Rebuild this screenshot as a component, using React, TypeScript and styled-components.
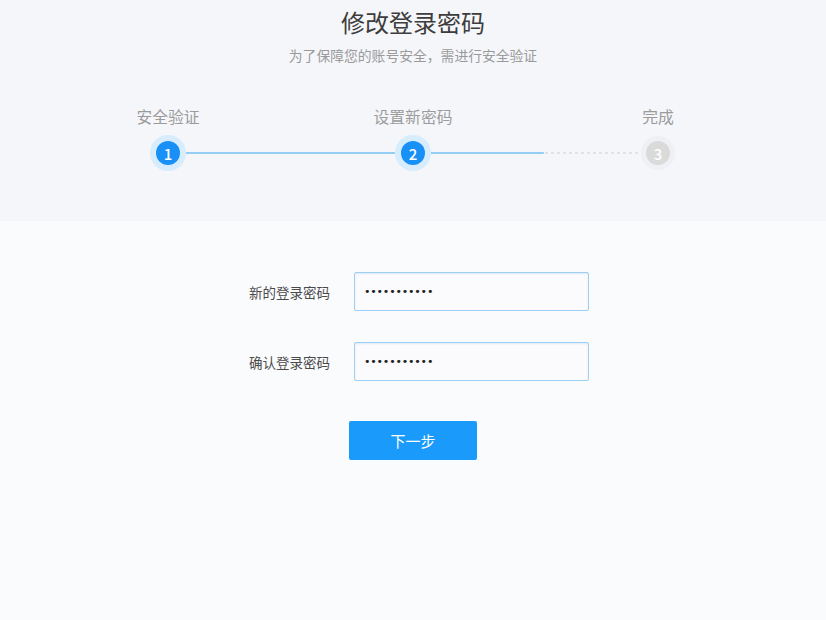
import React from "react";
import styled, { createGlobalStyle, css } from "styled-components";

const PageStyle = createGlobalStyle`
  html, body {
    margin: 0;
    padding: 0;
    background: #fafbfd;
    font-family: "Noto Sans CJK SC", "Noto Sans", sans-serif;
  }
  * { box-sizing: border-box; }
`;

const Page = styled.div`
  min-height: 620px;
  display: flex;
  flex-direction: column;
`;

const Header = styled.section`
  background: #f5f6fa;
  height: 221px;
  padding-top: 6px;
  display: flex;
  flex-direction: column;
  align-items: center;
`;

const Title = styled.h1`
  margin: 0;
  font-size: 24px;
  line-height: 32px;
  font-weight: 400;
  color: #3d3d3d;
`;

const Subtitle = styled.p`
  margin: 7px 0 0;
  font-size: 13.8px;
  line-height: 20px;
  color: #9a9a9a;
`;

const Steps = styled.div`
  margin-top: 41px;
  width: 735px;
  display: flex;
  flex-direction: column;
  align-items: center;
`;

const Labels = styled.div`
  width: 100%;
  display: grid;
  grid-template-columns: repeat(3, 1fr);
`;

const Label = styled.span`
  text-align: center;
  font-size: 15.8px;
  line-height: 22px;
  color: #9b9b9b;
`;

const Track = styled.div`
  margin-top: 13px;
  width: 514px;
  display: flex;
  align-items: center;
`;

const Dot = styled.span<{ $active?: boolean }>`
  flex: none;
  width: 24px;
  height: 24px;
  border-radius: 50%;
  display: flex;
  align-items: center;
  justify-content: center;
  font-size: 15px;
  font-weight: 500;
  color: #fff;
  ${(p) =>
    p.$active
      ? css`
          background: #1890f5;
          box-shadow: 0 0 0 6px #d7ecfd;
        `
      : css`
          background: #dadada;
          box-shadow: 0 0 0 5px #eef0f3;
        `}
`;

const Line = styled.span<{ $done: number }>`
  flex: 1;
  height: 2px;
  margin: 0 6px;
  background:
    linear-gradient(#93cff5, #93cff5) left / ${(p) => p.$done}% 100% no-repeat,
    repeating-linear-gradient(90deg, #dfe2e7 0 3px, transparent 3px 6px);
`;

const Body = styled.section`
  padding-top: 51px;
  display: flex;
  flex-direction: column;
  align-items: center;
`;

const Form = styled.div`
  display: grid;
  grid-template-columns: 120px 235px;
  column-gap: 24px;
  row-gap: 31px;
  align-items: center;
  margin-left: -27px;
`;

const FieldLabel = styled.label`
  text-align: right;
  font-size: 13.5px;
  color: #4a4a4a;
`;

const Input = styled.input`
  height: 39px;
  width: 235px;
  border: 1px solid #9ccff6;
  border-radius: 2px;
  background: #fbfbfd;
  box-shadow: inset 0 1px 2px rgba(0, 90, 160, 0.12);
  padding: 0 9px;
  font-family: "DejaVu Sans", sans-serif;
  font-size: 11px;
  letter-spacing: -0.2px;
  color: #222;
  outline: none;
`;

const NextButton = styled.button`
  margin-top: 40px;
  width: 128px;
  height: 39px;
  border: none;
  border-radius: 2px;
  background: #1a9bfc;
  color: #fff;
  font-family: inherit;
  font-size: 15px;
  cursor: pointer;
`;

const App = () => {
  return (
    <>
      <PageStyle />
      <Page>
        <Header>
          <Title>修改登录密码</Title>
          <Subtitle>为了保障您的账号安全，需进行安全验证</Subtitle>
          <Steps>
            <Labels>
              <Label>安全验证</Label>
              <Label>设置新密码</Label>
              <Label>完成</Label>
            </Labels>
            <Track>
              <Dot $active>1</Dot>
              <Line $done={100} />
              <Dot $active>2</Dot>
              <Line $done={54} />
              <Dot>3</Dot>
            </Track>
          </Steps>
        </Header>
        <Body>
          <Form>
            <FieldLabel>新的登录密码</FieldLabel>
            <Input type="password" defaultValue="12345678901" />
            <FieldLabel>确认登录密码</FieldLabel>
            <Input type="password" defaultValue="12345678901" />
          </Form>
          <NextButton>下一步</NextButton>
        </Body>
      </Page>
    </>
  );
};

export default App;
